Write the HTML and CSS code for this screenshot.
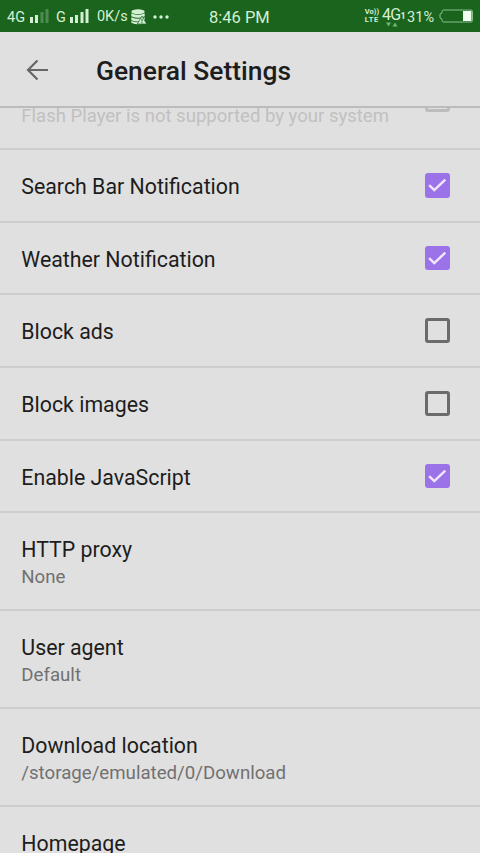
FILE: index.html
```html
<!DOCTYPE html>
<html lang="en">
<head>
<meta charset="utf-8">
<title>General Settings</title>
<link rel="stylesheet" href="styles.css">
</head>
<body>
<div class="status">
  <div class="status-left">
    <span class="net">4G</span>
    <svg class="bars-one" width="20" height="16" viewBox="0 0 20 16" fill="#d3f0d3"><path d="M0 9h3v6H0zM5 7h3v8H5z"/><path opacity=".28" d="M10.500 4h3v11h-3zM15.500 1h3v14h-3z"/></svg>
    <span class="net">G</span>
    <svg class="bars-two" width="20" height="16" viewBox="0 0 20 16" fill="#d3f0d3"><path d="M0 9h3v6H0zM5 7h3v8H5zM10.500 4h3v11h-3zM15.500 1h3v14h-3z"/></svg>
    <span class="speed">0K/s</span>
    <svg class="disk" width="16" height="16" viewBox="0 0 16 16"><g fill="#d3f0d3"><ellipse cx="7" cy="2.700" rx="6.700" ry="2.400"/><path d="M.3 4.300q6.700 3 13.400 0v3q-6.700 3-13.400 0zM.3 8.200q6.700 3 13.400 0v3q-6.700 2.600-13.400 0zM.3 12q6.700 2.500 13.400 0v1.700q-6.700 3-13.400 0z"/><path d="M11 7l4.700 8H6.300z" stroke="#1b641e" stroke-width=".7"/></g><path d="M11 9.800v2.700M11 13.200v1" stroke="#1b641e"/></svg>
    <svg class="dots" width="16" height="4" viewBox="0 0 16 4" fill="#d3f0d3"><circle cx="2" cy="2" r="1.700"/><circle cx="8" cy="2" r="1.700"/><circle cx="14" cy="2" r="1.700"/></svg>
  </div>
  <div class="clock">8:46 PM</div>
  <div class="status-right">
    <div class="volte"><span>Vo))</span><span class="lte">LTE</span></div>
    <div class="data"><span class="data-name">4G<small>1</small></span><svg width="12" height="5" viewBox="0 0 12 5" fill="#71b575"><path d="M0 .5h5L2.500 4.500zM6.500 4.500h5L9 .5z"/></svg></div>
    <span class="percent">31%</span>
    <svg class="battery" width="35" height="14" viewBox="0 0 35 14"><path d="M4.500 1H32q1.500 0 1.500 1.500v9q0 1.500-1.500 1.500H4.500Q3 13 3 11.500V10L1 9V5l2-1V2.500Q3 1 4.500 1z" fill="none" stroke="#8abf8c"/><path d="M24 2h8.500v10H24z" fill="#f0fff0"/></svg>
  </div>
</div>
<header class="header">
  <svg class="back" width="22" height="22" viewBox="0 0 22 22" fill="none" stroke="#666" stroke-width="2.200"><path d="M22 11H2M11.500 1.500L2 11l9.500 9.500"/></svg>
  <h1>General Settings</h1>
</header>
<main class="list">
  <div class="row flash"><div class="summary">Flash Player is not supported by your system</div><span class="box"></span></div>
  <div class="row"><div class="label">Search Bar Notification</div><span class="box checked"><svg width="25" height="25" viewBox="0 0 25 25"><path d="M4.200 12.300l5.300 5.200L20.700 6.700"/></svg></span></div>
  <div class="row"><div class="label">Weather Notification</div><span class="box checked"><svg width="25" height="25" viewBox="0 0 25 25"><path d="M4.200 12.300l5.300 5.200L20.700 6.700"/></svg></span></div>
  <div class="row"><div class="label">Block ads</div><span class="box"></span></div>
  <div class="row"><div class="label">Block images</div><span class="box"></span></div>
  <div class="row"><div class="label">Enable JavaScript</div><span class="box checked"><svg width="25" height="25" viewBox="0 0 25 25"><path d="M4.200 12.300l5.300 5.200L20.700 6.700"/></svg></span></div>
  <div class="row double"><div><div class="label">HTTP proxy</div><div class="summary">None</div></div></div>
  <div class="row double"><div><div class="label">User agent</div><div class="summary">Default</div></div></div>
  <div class="row double"><div><div class="label">Download location</div><div class="summary">/storage/emulated/0/Download</div></div></div>
  <div class="row last"><div class="label">Homepage</div></div>
</main>
</body>
</html>
```
FILE: styles.css
```css
* { box-sizing: border-box; }
body {
  margin: 0;
  height: 853px;
  overflow: hidden;
  display: flex;
  flex-direction: column;
  background: #e0e0e0;
  color: #1d1d1d;
  font-family: Roboto, sans-serif;
}
svg { display: block; flex: none; }
.status {
  flex: none;
  height: 32px;
  display: grid;
  grid-template-columns: 209px 62px 1fr;
  align-items: center;
  background: #1b641e;
  color: #d3f0d3;
  white-space: nowrap;
}
.status-left { display: flex; align-items: center; padding: 2px 0 0 7px; }
.net { font-size: 14.500px; line-height: 16px; margin-top: 2px; }
.bars-one { margin: -2px 6px 0 5px; }
.bars-two { margin: -2px 7px 0 4px; }
.speed { font-size: 14.500px; line-height: 16px; margin-top: 0; }
.disk { margin: -1px 6px 0 3px; }
.dots { margin-top: -1px; }
.clock { font-size: 16.500px; line-height: 20px; padding-top: 3px; }
.status-right { display: flex; align-items: center; justify-content: flex-end; padding: 0 6px 0 0; }
.volte { display: flex; flex-direction: column; font-size: 7.500px; line-height: 8px; font-weight: 700; margin-right: 3px; }
.volte span { height: 8px; }
.volte .lte { letter-spacing: .6px; }
.data { width: 22px; padding-top: 2px; }
.data-name { display: flex; align-items: center; height: 14px; font-size: 16px; letter-spacing: -.8px; }
.data-name small { font-size: 9px; font-weight: 700; padding-top: 3px; }
.data svg { margin-left: 4px; }
.percent { font-size: 14.500px; line-height: 18px; margin: 3px 5px 0 3px; }
.header {
  flex: none;
  height: 76px;
  display: flex;
  align-items: center;
  padding: 1px 0 0 26px;
  border-bottom: 2px solid #bcbcbc;
}
.header h1 { margin: 3px 0 0 48px; font-size: 26.400px; line-height: 32px; font-weight: 500; }
.list { flex: 1; min-height: 0; overflow: hidden; }
.row {
  height: 72.700px;
  display: flex;
  justify-content: space-between;
  align-items: center;
  padding: 0 30.500px 0 21.300px;
  border-bottom: 2px solid #cdcdcd;
}
.label { font-size: 21.330px; line-height: 26px; padding-top: 3px; }
.summary { font-size: 18.670px; line-height: 24px; color: #717171; margin-top: 1px; }
.double { height: 97.900px; }
.double .summary { line-height: 26px; margin-bottom: -1.600px; }
.box {
  flex: none;
  width: 24.500px;
  height: 24.500px;
  border: 3px solid #6b6b6b;
  border-radius: 3px;
}
.checked { border: 0; background: #9b72e8; }
.checked svg { width: 24.500px; height: 24.500px; fill: none; stroke: #efe6ff; stroke-width: 2.500; }
.flash { height: 42px; align-items: flex-start; overflow: hidden; }
.flash .summary { color: #c0c0c0; font-size: 18.550px; margin-top: -4px; }
.flash .box { border-color: #bcbcbc; margin-top: -21px; }
.last { height: 46px; align-items: flex-start; padding-top: 21px; border-bottom: 0; }
```
